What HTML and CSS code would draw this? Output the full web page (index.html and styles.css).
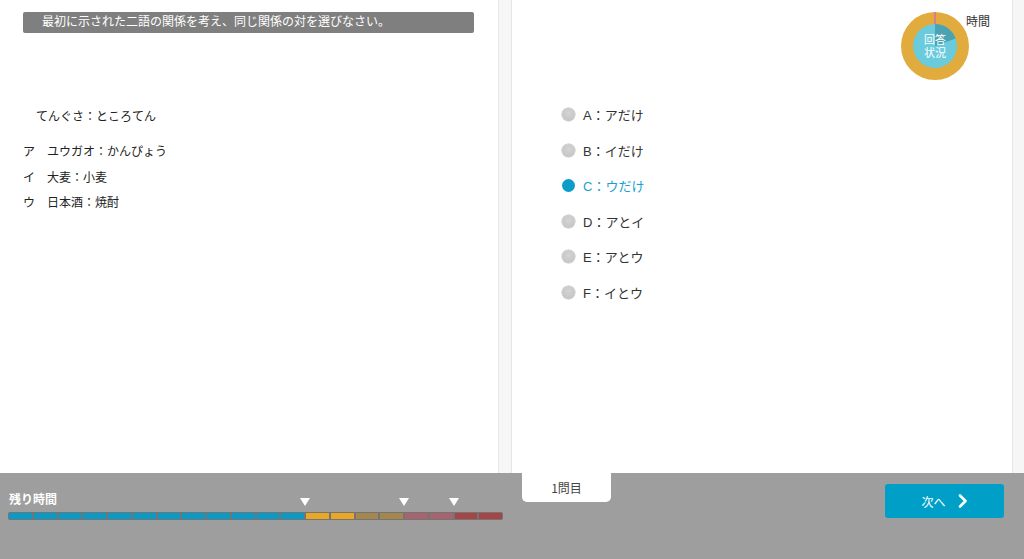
FILE: index.html
```html
<!DOCTYPE html>
<html lang="ja">
<head>
<meta charset="utf-8">
<title>適性検査</title>
<link rel="stylesheet" href="styles.css">
</head>
<body>
<div class="page">
  <main class="main">
    <section class="panel panel-left">
      <div class="instruction">最初に示された二語の関係を考え、同じ関係の対を選びなさい。</div>
      <p class="question">てんぐさ：ところてん</p>
      <ul class="pairs">
        <li>ア　ユウガオ：かんぴょう</li>
        <li>イ　大麦：小麦</li>
        <li>ウ　日本酒：焼酎</li>
      </ul>
    </section>
    <section class="panel panel-right">
      <div class="status">
        <div class="donut">
          <svg width="68" height="68" viewBox="0 0 68 68">
            <circle cx="34" cy="34" r="34" fill="#e2ab3d"/>
            <circle cx="34" cy="34" r="22" fill="#69cbdc"/>
            <path d="M34 34 L34 12 A22 22 0 0 1 54.67 26.48 Z" fill="#4aa2b3"/>
            <line x1="34" y1="0" x2="34" y2="12" stroke="#e4788a" stroke-width="2"/>
          </svg>
          <div class="donut-label"><span>回答</span><span>状況</span></div>
        </div>
        <span class="time-label">時間</span>
      </div>
      <ul class="options">
        <li class="option"><span class="radio"></span>A：アだけ</li>
        <li class="option"><span class="radio"></span>B：イだけ</li>
        <li class="option selected"><span class="radio"></span>C：ウだけ</li>
        <li class="option"><span class="radio"></span>D：アとイ</li>
        <li class="option"><span class="radio"></span>E：アとウ</li>
        <li class="option"><span class="radio"></span>F：イとウ</li>
      </ul>
    </section>
  </main>
  <footer class="footer">
    <div class="timer">
      <div class="timer-label">残り時間</div>
      <div class="bar-wrap">
        <span class="marker" style="left: 60%"></span>
        <span class="marker" style="left: 80%"></span>
        <span class="marker" style="left: 90%"></span>
        <div class="bar">
          <span class="seg blue"></span><span class="seg blue"></span><span class="seg blue"></span><span class="seg blue"></span>
          <span class="seg blue"></span><span class="seg blue"></span><span class="seg blue"></span><span class="seg blue"></span>
          <span class="seg blue"></span><span class="seg blue"></span><span class="seg blue"></span><span class="seg blue"></span>
          <span class="seg orange"></span><span class="seg orange"></span>
          <span class="seg tan"></span><span class="seg tan"></span>
          <span class="seg mauve"></span><span class="seg mauve"></span>
          <span class="seg red"></span><span class="seg red"></span>
        </div>
      </div>
    </div>
    <div class="tab">1問目</div>
    <button class="next" type="button">
      <span>次へ</span>
      <svg width="10" height="14" viewBox="0 0 10 14"><polyline points="2,1.5 7.5,7 2,12.5" fill="none" stroke="#fff" stroke-width="2.6" stroke-linecap="round" stroke-linejoin="round"/></svg>
    </button>
  </footer>
</div>
</body>
</html>
```

FILE: styles.css
```css
* { box-sizing: border-box; }
html, body { margin: 0; padding: 0; }
body {
  font-family: "Liberation Sans", "Noto Sans CJK JP", sans-serif;
  color: #222;
  width: 1024px;
  height: 559px;
  overflow: hidden;
}
ul { list-style: none; margin: 0; padding: 0; }
p { margin: 0; }

.page { display: flex; flex-direction: column; height: 559px; }

.main {
  display: flex;
  height: 473px;
  background: #f6f6f6;
}
.panel { background: #fff; height: 100%; }
.panel-left {
  width: 499px;
  border-right: 1px solid #e6e6e6;
  padding-top: 12px;
}
.panel-right {
  width: 502px;
  margin-left: 12px;
  border-left: 1px solid #e6e6e6;
  border-right: 1px solid #e6e6e6;
  padding-left: 50px;
  padding-top: 12px;
}

.instruction {
  margin-left: 23px;
  width: 451px;
  height: 21px;
  line-height: 21px;
  background: #7f7f7f;
  border-radius: 2px;
  color: #fff;
  font-size: 12px;
  padding-left: 19px;
}
.question {
  margin-top: 74px;
  padding-left: 36px;
  font-size: 12px;
  line-height: 20px;
}
.pairs {
  margin-top: 13px;
  padding-left: 23px;
  font-size: 12px;
}
.pairs li { line-height: 25.5px; height: 25.5px; }

.status {
  display: flex;
  justify-content: flex-end;
  align-items: flex-start;
  padding-right: 22px;
}
.donut {
  display: grid;
  place-items: center;
  width: 68px;
  height: 68px;
}
.donut svg, .donut-label { grid-area: 1 / 1; }
.donut svg { display: block; }
.donut-label {
  display: flex;
  flex-direction: column;
  align-items: center;
  color: #fff;
  font-size: 11px;
  line-height: 13px;
  text-align: center;
  font-family: "Noto Sans CJK JP", sans-serif;
}
.donut-label span { display: block; height: 13px; }
.time-label {
  margin-left: -3px;
  margin-top: 2px;
  font-size: 12px;
  line-height: 16px;
  color: #333;
}

.options { margin-top: 17px; }
.option {
  display: flex;
  align-items: center;
  height: 35.5px;
  font-size: 13px;
  color: #333;
}
.radio {
  width: 13px;
  height: 13px;
  border-radius: 50%;
  background: radial-gradient(circle at 50% 40%, #d4d4d4 0%, #c6c6c6 70%, #b6b6b6 100%);
  box-shadow: 0 0 0 0.5px #bbbbbb;
  margin-right: 8px;
  flex: none;
}
.option.selected { color: #1b9fd0; }
.option.selected .radio { background: #0b9cc8; box-shadow: none; }

.footer {
  flex: 1;
  background: #9e9e9e;
  display: flex;
  align-items: flex-start;
}
.timer {
  width: 503px;
  padding-left: 8px;
}
.timer-label {
  margin-top: 19px;
  padding-left: 1px;
  font-size: 12px;
  line-height: 14px;
  font-weight: bold;
  color: #fff;
  font-family: "Noto Sans CJK JP", sans-serif;
}
.bar-wrap {
  position: relative;
  margin-top: 6px;
}
.marker {
  position: absolute;
  top: -14px;
  width: 0;
  height: 0;
  margin-left: -5px;
  border-left: 5px solid transparent;
  border-right: 5px solid transparent;
  border-top: 8px solid #fff;
}
.bar {
  display: grid;
  grid-template-columns: repeat(20, 1fr);
  gap: 2px;
  height: 8px;
  padding: 1px;
  background: #747474;
  border-radius: 2px;
}
.seg { display: block; }
.seg.blue { background: #0b9ac5; }
.seg.orange { background: #eaa725; }
.seg.tan { background: #a3874f; }
.seg.mauve { background: #a6646f; }
.seg.red { background: #a54646; }

.tab {
  margin-left: 19px;
  width: 89px;
  height: 29px;
  background: #fff;
  border-radius: 0 0 5px 5px;
  text-align: center;
  line-height: 29px;
  font-size: 12px;
  color: #444;
  font-family: "Noto Sans CJK JP", sans-serif;
}
.next {
  margin-left: auto;
  margin-right: 20px;
  margin-top: 11px;
  width: 119px;
  height: 34px;
  border: none;
  border-radius: 3px;
  background: #009fc7;
  color: #fff;
  font-size: 12px;
  font-family: "Noto Sans CJK JP", sans-serif;
  display: flex;
  align-items: center;
  justify-content: center;
  gap: 12px;
  padding: 0;
}
.next svg { display: block; }
```
